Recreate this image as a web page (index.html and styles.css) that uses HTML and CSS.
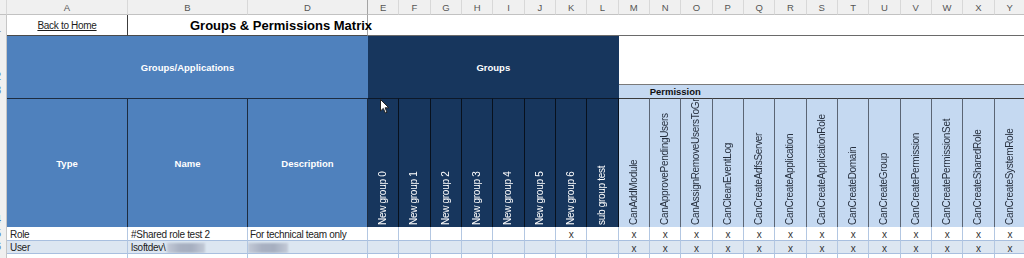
FILE: index.html
```html
<!DOCTYPE html>
<html>
<head>
<meta charset="utf-8">
<link rel="stylesheet" href="styles.css">
</head>
<body>
<div class="sheet">
  <!-- column letters -->
  <div class="ch"></div>
  <div class="ch">A</div>
  <div class="ch">B</div>
  <div class="ch freeze">D</div>
  <div class="ch">E</div><div class="ch">F</div><div class="ch">G</div><div class="ch">H</div>
  <div class="ch">I</div><div class="ch">J</div><div class="ch">K</div><div class="ch">L</div>
  <div class="ch">M</div><div class="ch">N</div><div class="ch">O</div><div class="ch">P</div>
  <div class="ch">Q</div><div class="ch">R</div><div class="ch">S</div><div class="ch">T</div>
  <div class="ch">U</div><div class="ch">V</div><div class="ch">W</div><div class="ch">X</div>
  <div class="ch">Y</div>

  <!-- row 1 -->
  <div class="rh gray"><span>1</span></div>
  <div class="back"><a href="#">Back to Home</a></div>
  <div class="title">Groups &amp; Permissions Matrix</div>
  <div class="r1rest"></div>

  <!-- rows 2-3 -->
  <div class="rh"><span>2</span></div>
  <div class="apps">Groups/Applications</div>
  <div class="groups">Groups</div>
  <div class="blank"></div>
  <div class="rh"><span>3</span></div>
  <div class="perm">Permission</div>

  <!-- row 4 -->
  <div class="rh"><span>4</span></div>
  <div class="th">Type</div>
  <div class="th">Name</div>
  <div class="th">Description</div>
  <div class="gv"><span>New group 0</span></div>
  <div class="gv"><span>New group 1</span></div>
  <div class="gv"><span>New group 2</span></div>
  <div class="gv"><span>New group 3</span></div>
  <div class="gv"><span>New group 4</span></div>
  <div class="gv"><span>New group 5</span></div>
  <div class="gv"><span>New group 6</span></div>
  <div class="gv"><span>sub group test</span></div>
  <div class="pv"><span>CanAddModule</span></div>
  <div class="pv"><span>CanApprovePendingUsers</span></div>
  <div class="pv"><span>CanAssignRemoveUsersToGroups</span></div>
  <div class="pv"><span>CanCleanEventLog</span></div>
  <div class="pv"><span>CanCreateAdfsServer</span></div>
  <div class="pv"><span>CanCreateApplication</span></div>
  <div class="pv"><span>CanCreateApplicationRole</span></div>
  <div class="pv"><span>CanCreateDomain</span></div>
  <div class="pv"><span>CanCreateGroup</span></div>
  <div class="pv"><span>CanCreatePermission</span></div>
  <div class="pv"><span>CanCreatePermissionSet</span></div>
  <div class="pv"><span>CanCreateSharedRole</span></div>
  <div class="pv"><span>CanCreateSystemRole</span></div>

  <!-- row 5 -->
  <div class="rh"><span>5</span></div>
  <div class="c">Role</div>
  <div class="c">#Shared role test 2</div>
  <div class="c tight">For technical team only</div>
  <div class="c"></div><div class="c"></div><div class="c"></div><div class="c"></div>
  <div class="c"></div><div class="c"></div><div class="c x">x</div><div class="c"></div>
  <div class="c x">x</div><div class="c x">x</div><div class="c x">x</div><div class="c x">x</div>
  <div class="c x">x</div><div class="c x">x</div><div class="c x">x</div><div class="c x">x</div>
  <div class="c x">x</div><div class="c x">x</div><div class="c x">x</div><div class="c x">x</div>
  <div class="c x">x</div>

  <!-- row 6 -->
  <div class="rh"><span>6</span></div>
  <div class="c alt">User</div>
  <div class="c alt">lsoftdev\<span class="blur b1"></span></div>
  <div class="c alt nopad"><span class="blur b2"></span></div>
  <div class="c alt"></div><div class="c alt"></div><div class="c alt"></div><div class="c alt"></div>
  <div class="c alt"></div><div class="c alt"></div><div class="c alt"></div><div class="c alt"></div>
  <div class="c alt x">x</div><div class="c alt x">x</div><div class="c alt x">x</div><div class="c alt x">x</div>
  <div class="c alt x">x</div><div class="c alt x">x</div><div class="c alt x">x</div><div class="c alt x">x</div>
  <div class="c alt x">x</div><div class="c alt x">x</div><div class="c alt x">x</div><div class="c alt x">x</div>
  <div class="c alt x">x</div>

  <!-- row 7 -->
  <div class="rh"><span>7</span></div>
  <div class="c"></div><div class="c"></div><div class="c"></div>
  <div class="c"></div><div class="c"></div><div class="c"></div><div class="c"></div>
  <div class="c"></div><div class="c"></div><div class="c"></div><div class="c"></div>
  <div class="c"></div><div class="c"></div><div class="c"></div><div class="c"></div>
  <div class="c"></div><div class="c"></div><div class="c"></div><div class="c"></div>
  <div class="c"></div><div class="c"></div><div class="c"></div><div class="c"></div>
  <div class="c"></div>

  <svg class="cursor" width="10" height="16" viewBox="0 0 10 16">
    <path d="M0.5 0.5 L0.5 12 L3.3 9.4 L5.3 14 L7 13.3 L5.1 8.8 L8.8 8.8 Z" fill="#fff" stroke="#222" stroke-width="1" stroke-linejoin="round"/>
  </svg>
</div>
</body>
</html>
```

FILE: styles.css
```css
html, body {
  margin: 0;
  padding: 0;
  background: #ffffff;
}

body {
  font-family: "Liberation Sans", Arial, sans-serif;
  overflow: hidden;
  width: 1024px;
  height: 258px;
}

.sheet {
  position: relative;
  display: grid;
  grid-template-columns: 7px 121px 120px 120px repeat(21, 31.33px);
  grid-template-rows: 15px 21px 48px 14px 129px 14px 13px 20px;
  width: 1024px;
  height: 258px;
  overflow: hidden;
}

.sheet > div {
  box-sizing: border-box;
  min-width: 0;
  overflow: hidden;
}

/* column letters */
.ch {
  background: #f0f0f0;
  color: #555555;
  font-size: 9.5px;
  display: flex;
  align-items: center;
  justify-content: center;
  border-right: 1px solid #d8d8d8;
  border-bottom: 1px solid #c2c2c2;
}

.ch.freeze {
  border-right: 1px solid #a4a4a4;
}

/* row numbers (mostly cropped) */
.rh {
  background: #f0f0f0;
  border-right: 1px solid #c6c6c6;
  display: flex;
  align-items: flex-end;
  justify-content: flex-end;
  padding: 0 5px 2px 0;
  font-size: 10px;
  color: #4a74b4;
}

.rh.gray {
  color: #666666;
}

.rh span {
  flex: none;
}

/* row 1 */
.back {
  border-right: 1px solid #3c3c3c;
  border-bottom: 1px solid #4a4a4a;
  display: flex;
  align-items: center;
  justify-content: center;
  font-size: 10px;
  letter-spacing: -0.3px;
}

.back a {
  color: #1c1c1c;
  text-decoration: underline;
}

.title {
  grid-column: span 2;
  border-right: 1px solid #a4a4a4;
  border-bottom: 1px solid #4a4a4a;
  display: flex;
  align-items: center;
  padding-left: 62px;
  padding-top: 1px;
  font-weight: bold;
  font-size: 13px;
  color: #000;
  white-space: nowrap;
}

.sheet > .title {
  overflow: visible;
}

.r1rest {
  grid-column: span 21;
  border-bottom: 1px solid #6a6a6a;
}

/* rows 2-3 */
.apps,
.groups {
  grid-row: 3 / 5;
  color: #ffffff;
  font-weight: bold;
  font-size: 9.5px;
  display: flex;
  align-items: center;
  justify-content: center;
}

.apps {
  grid-column: 2 / 5;
  background: #4f81bd;
}

.groups {
  grid-column: 5 / 13;
  background: #17365d;
}

.blank {
  grid-column: 13 / 26;
  grid-row: 3;
}

.perm {
  grid-column: 13 / 26;
  grid-row: 4;
  background: #c5d9f1;
  border-top: 1px solid #7a7a7a;
  display: flex;
  align-items: center;
  padding-left: 31px;
  font-weight: bold;
  font-size: 9.5px;
  color: #111;
}

/* row 4 headers */
.th {
  background: #4f81bd;
  color: #ffffff;
  font-weight: bold;
  font-size: 9.5px;
  display: flex;
  align-items: center;
  justify-content: center;
  border-top: 1px solid #1d2c40;
  border-right: 1px solid #1d2c40;
}

.gv,
.pv {
  display: flex;
  justify-content: center;
  font-size: 10px;
  letter-spacing: -0.3px;
}

.gv {
  background: #17365d;
  color: #ffffff;
  border-top: 1px solid #0c1829;
  border-right: 1px solid #08111d;
}

.pv {
  background: #c5d9f1;
  color: #27303f;
  border-top: 1px solid #3c3c3c;
  border-right: 1px solid #5b6574;
}

.gv span,
.pv span {
  writing-mode: vertical-rl;
  transform: rotate(180deg);
  white-space: nowrap;
  padding-top: 2px;
  line-height: 12px;
}

/* data rows */
.c {
  border-right: 1px solid #b3c7e2;
  border-bottom: 1px solid #a8bfdf;
  display: flex;
  align-items: center;
  padding-left: 3px;
  padding-top: 1px;
  font-size: 10px;
  letter-spacing: -0.3px;
  color: #222222;
  white-space: nowrap;
}

.c.tight {
  padding-left: 2px;
}

.c.nopad {
  padding-left: 0;
}

.c.x {
  justify-content: center;
  padding-left: 0;
  padding-top: 2px;
  color: #333333;
}

.c.alt {
  background: #dce6f1;
}

.blur {
  display: inline-block;
  height: 10px;
  background: linear-gradient(90deg, #c3cad7 0%, #a9b1c2 35%, #a6afc0 65%, #c3cad7 100%);
  filter: blur(0.8px);
}

.b1 {
  width: 38px;
  margin-left: 1px;
}

.b2 {
  width: 40px;
}

/* mouse pointer overlay */
.cursor {
  position: absolute;
  left: 380px;
  top: 99px;
}
```
